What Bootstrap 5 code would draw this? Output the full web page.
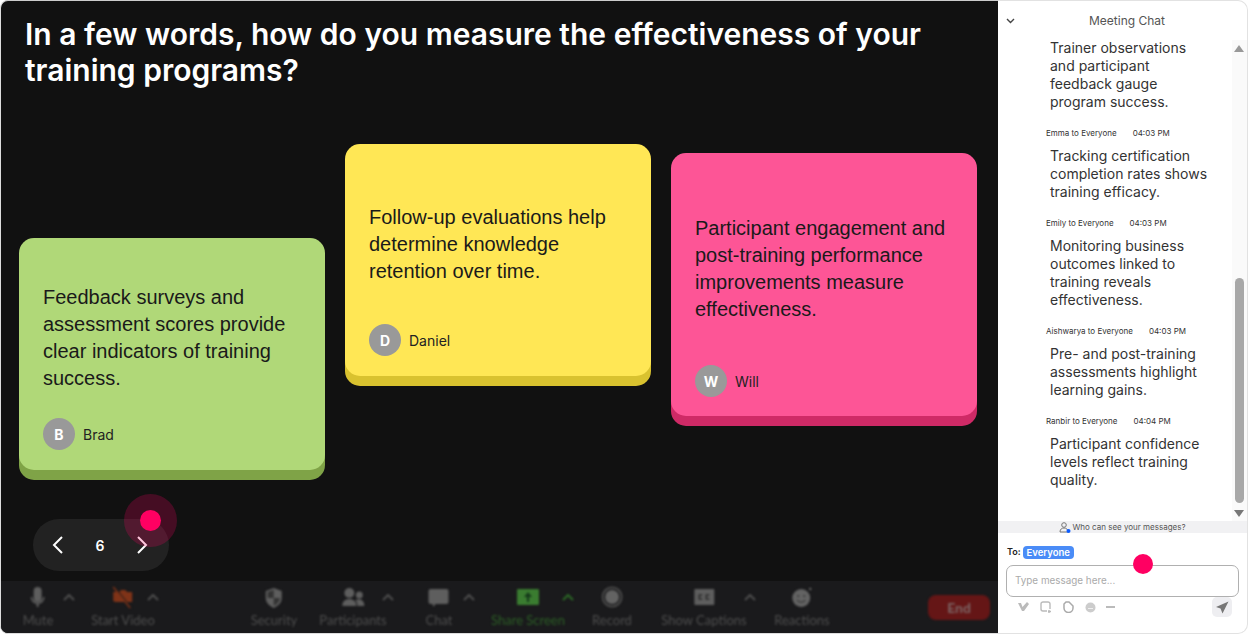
<!DOCTYPE html>
<html lang="en">
<head>
<meta charset="utf-8">
<title>Meeting poll</title>
<link href="https://cdn.jsdelivr.net/npm/bootstrap@5.3.0/dist/css/bootstrap.min.css" rel="stylesheet">
<style>
html,body{height:100%;margin:0;background:#fff;overflow:hidden}
.shell{width:1248px;height:634px;position:relative;font-family:"Inter","Liberation Sans",sans-serif;overflow:hidden}
.stage{width:998px;background:#111;border-left:1px solid #ddd;border-bottom:1px solid #ddd;border-top:1px solid #ccc;border-radius:8px 0 0 8px;overflow:hidden;flex:none}
.stage>*{flex:none}
.qtitle{font-family:"Inter","Liberation Sans",sans-serif;font-weight:600;font-size:30px;line-height:36px;color:#fff;margin:15px 40px 0 24px;height:72px}
.board{height:392px;padding:56px 0 0 18px;gap:20px}
.sticky{width:306px;border-radius:15px;padding:24px;color:#1a1a1a;display:flex;flex-direction:column;flex:none}
.sticky p{font-family:"Liberation Sans",Arial,sans-serif;font-size:20px;line-height:27px;margin:0}
.s-green{background:#b0d878;box-shadow:0 10px 0 #7fa347;height:232px;margin-top:94px;padding-top:46px}
.s-yellow{background:#ffe755;box-shadow:0 10px 0 #d9c22f;height:232px;padding-top:60px}
.s-pink{background:#fd5596;box-shadow:0 10px 0 #cf2a66;height:263px;margin-top:9px;padding-top:62px}
.s-pink .who{margin-top:42px}.s-yellow .who{margin-top:39px}.s-green .who{margin-top:26px}
.avatar{width:32px;height:32px;border-radius:50%;background:#999;color:#fff;font-size:14px;font-weight:700;flex:none}
.who span:last-child{font-size:14px;color:#222}
.pager{width:136px;height:52px;border-radius:26px;background:#222;color:#fff;margin:39px 0 0 32px;padding:0 21px 0 19px;position:relative;font-weight:600;font-size:14px}
.halo{position:absolute;left:91px;top:-25px;width:53px;height:53px;border-radius:50%;background:rgba(255,0,98,.22)}
.halo::after{content:"";position:absolute;left:16px;top:16px;width:21px;height:21px;border-radius:50%;background:#ff0062}
.tools{height:53px;margin-top:10px;background:#1a1a1c;position:relative;color:#4e4e4e;font-size:13px;font-family:"Lato","Open Sans",sans-serif}
.tool{position:absolute;top:5px;display:flex;flex-direction:column;align-items:center;transform:translateX(-50%);white-space:nowrap;line-height:14px;filter:blur(1.3px)}
.tool svg{height:24px;margin-bottom:3px;display:block}
.tool-share{color:#2c5f26}
.caret{position:absolute;top:13px;width:12px;height:7px;filter:blur(1px)}
.endbtn{position:absolute;left:927px;top:14px;width:62px;height:25px;border-radius:8px;background:#651616;color:#7d6767;font-weight:700;font-size:14px;filter:blur(1.2px)}
.chat{width:250px;position:relative;color:#333;border-radius:0 10px 10px 0;border:solid #e2e2e2;border-width:1px 1px 1px 0;flex:none}
.chead{height:38px;font-size:12px;color:#555;padding-top:11px;padding-left:9px;text-align:center}
.feed{height:482px;overflow:hidden;padding-left:52px;width:234px;font-size:14px;line-height:18px;color:#333}
.feed p{margin:0;width:160px}
.meta{font-size:8px;line-height:12px;margin:16px 0 8px -4px;color:#333;gap:16px;white-space:nowrap;display:flex}
.track{position:absolute;right:0;top:39px;width:15px;height:481px;background:#fafafa}
.track i{position:absolute;left:3px;top:238px;width:9px;height:225px;background:#a8a8a8;border-radius:5px}
.arrow{position:absolute;left:2px;width:0;height:0;border-left:5px solid transparent;border-right:5px solid transparent}
.a-up{top:5px;border-bottom:7px solid #999}
.a-down{bottom:4px;border-top:7px solid #777}
.notice{height:12px;background:#f1f1f3;font-size:8px;line-height:12px;color:#555;gap:1px}
.tolabel{font-size:9px;font-weight:600;color:#222;margin:12px 0 0 9px;height:14px;gap:2px}
.tochip{background:#4a8cf7;color:#fff;border-radius:4px;padding:0 4px;font-size:9.5px;line-height:13px;font-weight:600}
.entry{margin:6px 8px 0 8px;height:32px;border:1px solid #b0b0b0;border-radius:7px;font-size:9.9px;color:#aaa;padding:0 8px;line-height:29px}
.compose{margin:0 15px 0 19px;height:20px;gap:10.5px}
.compose>svg{filter:blur(.6px)}
.sendbox{margin-left:auto;width:20px;height:20px;background:#eeeef1;border-radius:5px}
.cursor2{position:absolute;left:135px;top:553px;width:20px;height:20px;border-radius:50%;background:#ff0062}
</style>
</head>
<body>
<div class="shell d-flex">
  <main class="stage d-flex flex-column">
    <h1 class="qtitle">In a few words, how do you measure the effectiveness of your training programs?</h1>
    <section class="board d-flex align-items-start">
      <article class="sticky s-green">
        <p>Feedback surveys and assessment scores provide clear indicators of training success.</p>
        <div class="who d-flex align-items-center gap-2"><span class="avatar d-flex align-items-center justify-content-center">B</span><span>Brad</span></div>
      </article>
      <article class="sticky s-yellow">
        <p>Follow-up evaluations help determine knowledge retention over time.</p>
        <div class="who d-flex align-items-center gap-2"><span class="avatar d-flex align-items-center justify-content-center">D</span><span>Daniel</span></div>
      </article>
      <article class="sticky s-pink">
        <p>Participant engagement and post-training performance improvements measure effectiveness.</p>
        <div class="who d-flex align-items-center gap-2"><span class="avatar d-flex align-items-center justify-content-center">W</span><span>Will</span></div>
      </article>
    </section>
    <nav class="pager d-flex align-items-center justify-content-between">
      <svg width="12" height="18" viewBox="0 0 12 18" fill="none" stroke="#fff" stroke-width="2"><path d="M10 1 2 9l8 8"/></svg>
      <span>6</span>
      <svg width="12" height="18" viewBox="0 0 12 18" fill="none" stroke="#fff" stroke-width="2"><path d="m2 1 8 8-8 8"/></svg>
      <span class="halo"></span>
    </nav>
    <footer class="tools">
      <div class="tool" style="left:37px"><svg width="20" viewBox="0 0 20 24" fill="#5e5e5e"><rect x="6" y="1" width="8" height="15" rx="4"/><path d="M3 11h1.600a5.400 5.400 0 0 0 10.800 0H17a7 7 0 0 1-6 7v3h-2v-3a7 7 0 0 1-6-7z"/></svg>Mute</div>
      <svg class="caret" style="left:62px" viewBox="0 0 12 7" fill="none" stroke="#4e4e4e" stroke-width="2"><path d="m1 6 5-5 5 5"/></svg>
      <div class="tool" style="left:122px"><svg width="22" viewBox="0 0 22 24" fill="#7f3318"><path d="M1 6h6l2-2h4l2 2h5v10H3l-2-1z"/><path d="M2 1l17 21" stroke="#1a1a1c" stroke-width="1.500"/><path d="M1 1l17 21" stroke="#7f3318" stroke-width="1.500"/></svg>Start Video</div>
      <svg class="caret" style="left:146px" viewBox="0 0 12 7" fill="none" stroke="#4e4e4e" stroke-width="2"><path d="m1 6 5-5 5 5"/></svg>
      <div class="tool" style="left:273px"><svg width="20" viewBox="0 0 20 24" fill="#5e5e5e"><path d="M10 2 18 5v7c0 5-4 8-8 10-4-2-8-5-8-10V5z"/><path d="M10 4v8H4V6zM10 12h6c0 4-3 6-6 8z" fill="#333"/></svg>Security</div>
      <div class="tool" style="left:352px"><svg width="24" viewBox="0 0 24 24" fill="#5e5e5e"><circle cx="8" cy="7" r="5"/><circle cx="18" cy="9" r="3.500"/><path d="M1 20c0-5 3-7 7-7s7 2 7 7zM16 20c0-3-1-5-2-6 5-2 9 0 9 6z"/></svg>Participants</div>
      <svg class="caret" style="left:381px" viewBox="0 0 12 7" fill="none" stroke="#4e4e4e" stroke-width="2"><path d="m1 6 5-5 5 5"/></svg>
      <div class="tool" style="left:438px"><svg width="22" viewBox="0 0 22 24" fill="#5e5e5e"><path d="M3 3h16a2 2 0 0 1 2 2v11a2 2 0 0 1-2 2H8l-2 3-1-3H3a2 2 0 0 1-2-2V5a2 2 0 0 1 2-2z"/></svg>Chat</div>
      <svg class="caret" style="left:462px" viewBox="0 0 12 7" fill="none" stroke="#4e4e4e" stroke-width="2"><path d="m1 6 5-5 5 5"/></svg>
      <div class="tool tool-share" style="left:527px"><svg width="24" viewBox="0 0 24 24" fill="#3a7c30"><rect x="1" y="3" width="22" height="16" rx="1"/><path d="M12 6l-4 5h3v5h2v-5h3z" fill="#14391a"/></svg>Share Screen</div>
      <svg class="caret" style="left:561px" viewBox="0 0 12 7" fill="none" stroke="#2c6a26" stroke-width="2"><path d="m1 6 5-5 5 5"/></svg>
      <div class="tool" style="left:611px"><svg width="24" viewBox="0 0 24 24"><circle cx="12" cy="11" r="9.500" fill="none" stroke="#4a4a4a" stroke-width="2"/><circle cx="12" cy="11" r="7" fill="#636363"/></svg>Record</div>
      <div class="tool" style="left:703px"><svg width="22" viewBox="0 0 22 24" fill="#5e5e5e"><rect x="1" y="3" width="20" height="16" rx="1"/><path d="M9 9H6v4h3M16 9h-3v4h3" fill="none" stroke="#2b2b2b" stroke-width="1.500"/></svg>Show Captions</div>
      <svg class="caret" style="left:743px" viewBox="0 0 12 7" fill="none" stroke="#4e4e4e" stroke-width="2"><path d="m1 6 5-5 5 5"/></svg>
      <div class="tool" style="left:801px"><svg width="24" viewBox="0 0 24 24" fill="#636363"><circle cx="11" cy="12" r="9"/><circle cx="8" cy="10" r="1" fill="#333"/><circle cx="14" cy="10" r="1" fill="#333"/><path d="M7 14c2 3 6 3 8 0" fill="none" stroke="#333" stroke-width="1.200"/><circle cx="20" cy="3" r="1.200"/></svg>Reactions</div>
      <div class="endbtn d-flex align-items-center justify-content-center">End</div>
    </footer>
  </main>
  <aside class="chat d-flex flex-column">
    <header class="chead position-relative">Meeting Chat
      <svg class="position-absolute" style="left:8px;top:17px" width="9" height="6" viewBox="0 0 9 6" fill="none" stroke="#444" stroke-width="1.400"><path d="m1 1 3.500 3.500L8 1"/></svg>
    </header>
    <div class="feed">
      <p>Trainer observations<br>and participant<br>feedback gauge<br>program success.</p>
      <div class="meta"><span>Emma to Everyone</span><span>04:03 PM</span></div>
      <p>Tracking certification completion rates shows training efficacy.</p>
      <div class="meta"><span>Emily to Everyone</span><span>04:03 PM</span></div>
      <p>Monitoring business outcomes linked to training reveals effectiveness.</p>
      <div class="meta"><span>Aishwarya to Everyone</span><span>04:03 PM</span></div>
      <p>Pre- and post-training assessments highlight learning gains.</p>
      <div class="meta"><span>Ranbir to Everyone</span><span>04:04 PM</span></div>
      <p>Participant confidence levels reflect training quality.</p>
    </div>
    <div class="track"><span class="arrow a-up"></span><i></i><span class="arrow a-down"></span></div>
    <div class="notice d-flex align-items-center justify-content-center">
      <svg width="12" height="11" viewBox="0 0 12 11"><circle cx="5" cy="3" r="2.300" fill="none" stroke="#777"/><path d="M1 10c0-3 2-4 4-4s4 1 4 4z" fill="none" stroke="#777"/><circle cx="9.500" cy="9" r="2" fill="#0b5cff"/></svg>
      Who can see your messages?
    </div>
    <div class="tolabel d-flex align-items-center">To: <span class="tochip">Everyone</span></div>
    <div class="entry">Type message here...</div>
    <div class="compose d-flex align-items-center">
      <svg width="12" height="12" viewBox="0 0 12 12" fill="#bbb"><path d="M1 2h3l1.500 4L10 1l2 2-5 7H5z"/></svg>
      <svg width="12" height="12" viewBox="0 0 12 12" fill="none" stroke="#bbb" stroke-width="1.400"><path d="M10 8V3a2 2 0 0 0-2-2H3a2 2 0 0 0-2 2v5a2 2 0 0 0 2 2h4"/><path d="M9 9v3M8 10.500h3"/></svg>
      <svg width="12" height="12" viewBox="0 0 12 12" fill="none" stroke="#aaa" stroke-width="1.500"><path d="M4 1h3l4 4v2a4.500 4.500 0 1 1-9 0V3z"/></svg>
      <svg width="11" height="11" viewBox="0 0 11 11" fill="#ccc"><circle cx="5.500" cy="5.500" r="5"/><path d="M3 6.500h5" stroke="#eee"/></svg>
      <svg width="10" height="4" viewBox="0 0 10 4" fill="#bbb"><rect y="1" width="9" height="2"/></svg>
      <span class="sendbox d-flex align-items-center justify-content-center"><svg width="13" height="13" viewBox="0 0 13 13" fill="#777"><path d="M12.500.5 0 6l4.500 1.500L6.500 12.500z"/></svg></span>
    </div>
    <span class="cursor2"></span>
  </aside>
</div>
</body>
</html>
